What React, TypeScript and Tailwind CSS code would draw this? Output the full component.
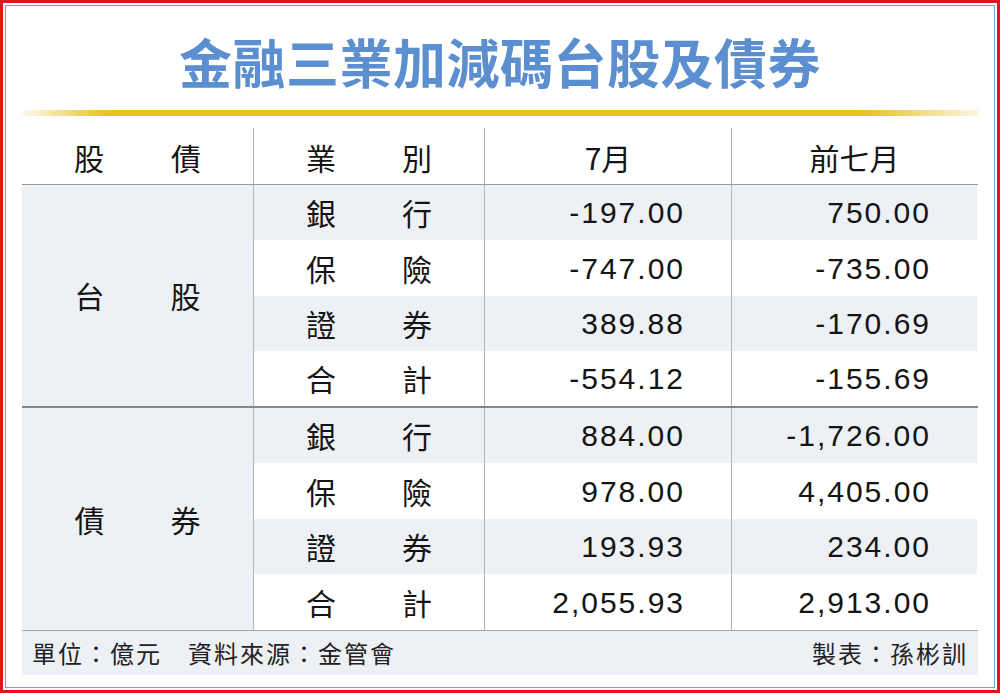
import * as React from 'react';

const cjk = "font-['Noto_Sans_CJK_TC','Noto_Sans_CJK_SC',sans-serif]";
const num = "font-['Liberation_Sans',Arial,sans-serif]";

interface Row {
  label: [string, string];
  july: string;
  ytd: string;
}

const groups: { name: [string, string]; rows: Row[]; heights: string[] }[] = [
  {
    name: ['台', '股'],
    heights: ['h-[55px]', 'h-[56px]', 'h-[55px]', 'h-[55px]'],
    rows: [
      { label: ['銀', '行'], july: '-197.00', ytd: '750.00' },
      { label: ['保', '險'], july: '-747.00', ytd: '-735.00' },
      { label: ['證', '券'], july: '389.88', ytd: '-170.69' },
      { label: ['合', '計'], july: '-554.12', ytd: '-155.69' }
    ]
  },
  {
    name: ['債', '券'],
    heights: ['h-[55px]', 'h-[56px]', 'h-[55px]', 'h-[56px]'],
    rows: [
      { label: ['銀', '行'], july: '884.00', ytd: '-1,726.00' },
      { label: ['保', '險'], july: '978.00', ytd: '4,405.00' },
      { label: ['證', '券'], july: '193.93', ytd: '234.00' },
      { label: ['合', '計'], july: '2,055.93', ytd: '2,913.00' }
    ]
  }
];

const Pair: React.FC<{ chars: [string, string]; gap: string; className?: string }> = ({ chars, gap, className }) => (
  <div className={`flex items-center justify-center ${gap} ${className ?? ''}`}>
    <span>{chars[0]}</span>
    <span>{chars[1]}</span>
  </div>
);

const App: React.FC = () => {
  return (
    <div className="w-[1000px] h-[693px] border-[3px] border-[#e5131b] bg-white p-[2px] flex">
      <div className="flex-1 flex flex-col border border-[#7d9cc7] px-4">
        <div className="h-[104px] flex items-center justify-center pt-[6px]">
          <h1 className={`${cjk} text-[53px] font-bold leading-none text-[#5b8fd0] tracking-[0.5px]`}>
            金融三業加減碼台股及債券
          </h1>
        </div>
        <div className="h-[6px] bg-[linear-gradient(to_right,#fdfaf0_0%,#e8c11f_9%,#e8c11f_88%,#fbf6e4_100%)]" />

        <div className="mt-[12px] flex flex-col text-[#141414]">
          {/* header */}
          <div className={`grid grid-cols-[231px_231px_247px_246px] h-[57px] border-b border-[#9a9a9a] ${cjk} text-[30px]`}>
            <Pair chars={['股', '債']} gap="gap-[67px]" className="pt-[2px]" />
            <Pair chars={['業', '別']} gap="gap-[66px]" className="border-l border-[#b4b4b4] pt-[2px]" />
            <div className="border-l border-[#b4b4b4] flex items-center justify-center pt-[2px]">7月</div>
            <div className="border-l border-[#b4b4b4] flex items-center justify-center pt-[2px]">前七月</div>
          </div>

          {groups.map((g, gi) => (
            <div
              key={gi}
              className={`flex ${gi === 0 ? 'border-b-2 border-[#888888]' : ''}`}
            >
              <Pair
                chars={g.name}
                gap="gap-[66px]"
                className={`w-[231px] bg-[#edf0f5] ${cjk} text-[30px]`}
              />
              <div className="flex flex-col">
                {g.rows.map((r, ri) => (
                  <div
                    key={ri}
                    className={`grid grid-cols-[231px_247px_246px] ${g.heights[ri]} ${ri % 2 === 0 ? 'bg-[#edf0f5]' : 'bg-white'}`}
                  >
                    <Pair chars={r.label} gap="gap-[66px]" className={`border-l border-[#b4b4b4] ${cjk} text-[30px]`} />
                    <div className={`border-l border-[#b4b4b4] flex items-center justify-end pr-[46px] ${num} text-[30px] tracking-[2px]`}>
                      {r.july}
                    </div>
                    <div className={`border-l border-[#b4b4b4] flex items-center justify-end pr-[46px] ${num} text-[30px] tracking-[2px]`}>
                      {r.ytd}
                    </div>
                  </div>
                ))}
              </div>
            </div>
          ))}

          {/* footer */}
          <div className={`h-[45px] border-t border-[#a6a6a6] bg-[#edf0f5] flex items-center justify-between px-[10px] ${cjk} text-[24px] tracking-[2px] text-[#222]`}>
            <span>單位：億元　資料來源：金管會</span>
            <span>製表：孫彬訓</span>
          </div>
        </div>
      </div>
    </div>
  );
};

export default App;
